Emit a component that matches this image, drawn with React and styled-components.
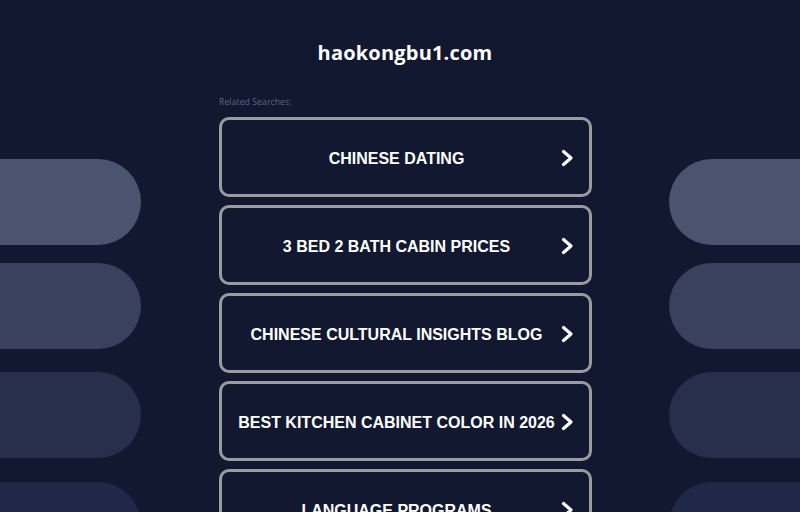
import React from 'react';
import styled, { createGlobalStyle } from 'styled-components';

const GlobalStyle = createGlobalStyle`
  html, body {
    margin: 0;
    padding: 0;
    background: #111830;
  }
  body {
    font-family: "Open Sans", "Liberation Sans", sans-serif;
    overflow: hidden;
  }
`;

const Page = styled.div`
  display: grid;
  grid-template-columns: 141px 1fr 131px;
  width: 800px;
  height: 512px;
  overflow: hidden;
  background: #111830;
`;

// decorative rounded bars down both sides
const SideColumn = styled.div`
  display: flex;
  flex-direction: column;
  align-items: ${props => (props.$side === 'left' ? 'flex-end' : 'flex-start')};
  padding-top: 159px;
  overflow: hidden;
`;

const Pill = styled.div`
  flex: none;
  width: 220px;
  height: 86px;
  margin-top: ${props => props.$gap || 0}px;
  background: ${props => props.$color};
  border-radius: ${props => (props.$side === 'left' ? '0 43px 43px 0' : '43px 0 0 43px')};
`;

const Center = styled.main`
  display: flex;
  flex-direction: column;
  align-items: center;
  padding-top: 41px;
`;

const Domain = styled.h1`
  margin: 0;
  font-family: "Open Sans", sans-serif;
  font-weight: 700;
  font-size: 20px;
  line-height: 24px;
  color: #ffffff;
  letter-spacing: 0.2px;
`;

const Results = styled.section`
  width: 373px;
  margin-top: 32px;
  padding-left: 1px;
`;

const Caption = styled.div`
  font-family: "Open Sans", sans-serif;
  font-size: 8.5px;
  line-height: 10px;
  letter-spacing: 0.15px;
  color: #5f6781;
  margin-bottom: 10px;
`;

const List = styled.div`
  display: flex;
  flex-direction: column;
  gap: 8px;
`;

const SearchLink = styled.a`
  display: grid;
  align-items: center;
  height: 80px;
  box-sizing: border-box;
  border: 3px solid #9c9c9f;
  border-radius: 10px;
  color: #ffffff;
  text-decoration: none;
  cursor: pointer;
`;

const Label = styled.span`
  grid-area: 1 / 1;
  text-align: center;
  padding-right: 18px;
  padding-top: 4px;
  font-family: "Liberation Sans", Arial, sans-serif;
  font-weight: 700;
  font-size: 16px;
  text-transform: uppercase;
  white-space: nowrap;
`;

const Arrow = styled.svg`
  grid-area: 1 / 1;
  justify-self: end;
  margin-right: 15px;
  margin-top: 1px;
`;

const Chevron = () => (
  <Arrow width="13" height="18" viewBox="0 0 13 18">
    <polyline
      points="2.5,2.5 10,9 2.5,15.5"
      fill="none"
      stroke="#ffffff"
      strokeWidth="3.2"
      strokeLinecap="round"
      strokeLinejoin="round"
    />
  </Arrow>
);

const searches = [
  'Chinese Dating',
  '3 Bed 2 Bath Cabin Prices',
  'Chinese Cultural Insights Blog',
  'Best Kitchen Cabinet Color in 2026',
  'Language Programs',
];

const pills = [
  { color: '#4b546f', gap: 0 },
  { color: '#39415e', gap: 18 },
  { color: '#272f4d', gap: 23 },
  { color: '#1f2848', gap: 24 },
];

export default function App() {
  return (
    <>
      <GlobalStyle />
      <Page>
        <SideColumn $side="left">
          {pills.map((p, i) => (
            <Pill key={i} $side="left" $color={p.color} $gap={p.gap} />
          ))}
        </SideColumn>
        <Center>
          <Domain>haokongbu1.com</Domain>
          <Results>
            <Caption>Related Searches:</Caption>
            <List>
              {searches.map(s => (
                <SearchLink key={s}>
                  <Label>{s}</Label>
                  <Chevron />
                </SearchLink>
              ))}
            </List>
          </Results>
        </Center>
        <SideColumn $side="right">
          {pills.map((p, i) => (
            <Pill key={i} $side="right" $color={p.color} $gap={p.gap} />
          ))}
        </SideColumn>
      </Page>
    </>
  );
}
